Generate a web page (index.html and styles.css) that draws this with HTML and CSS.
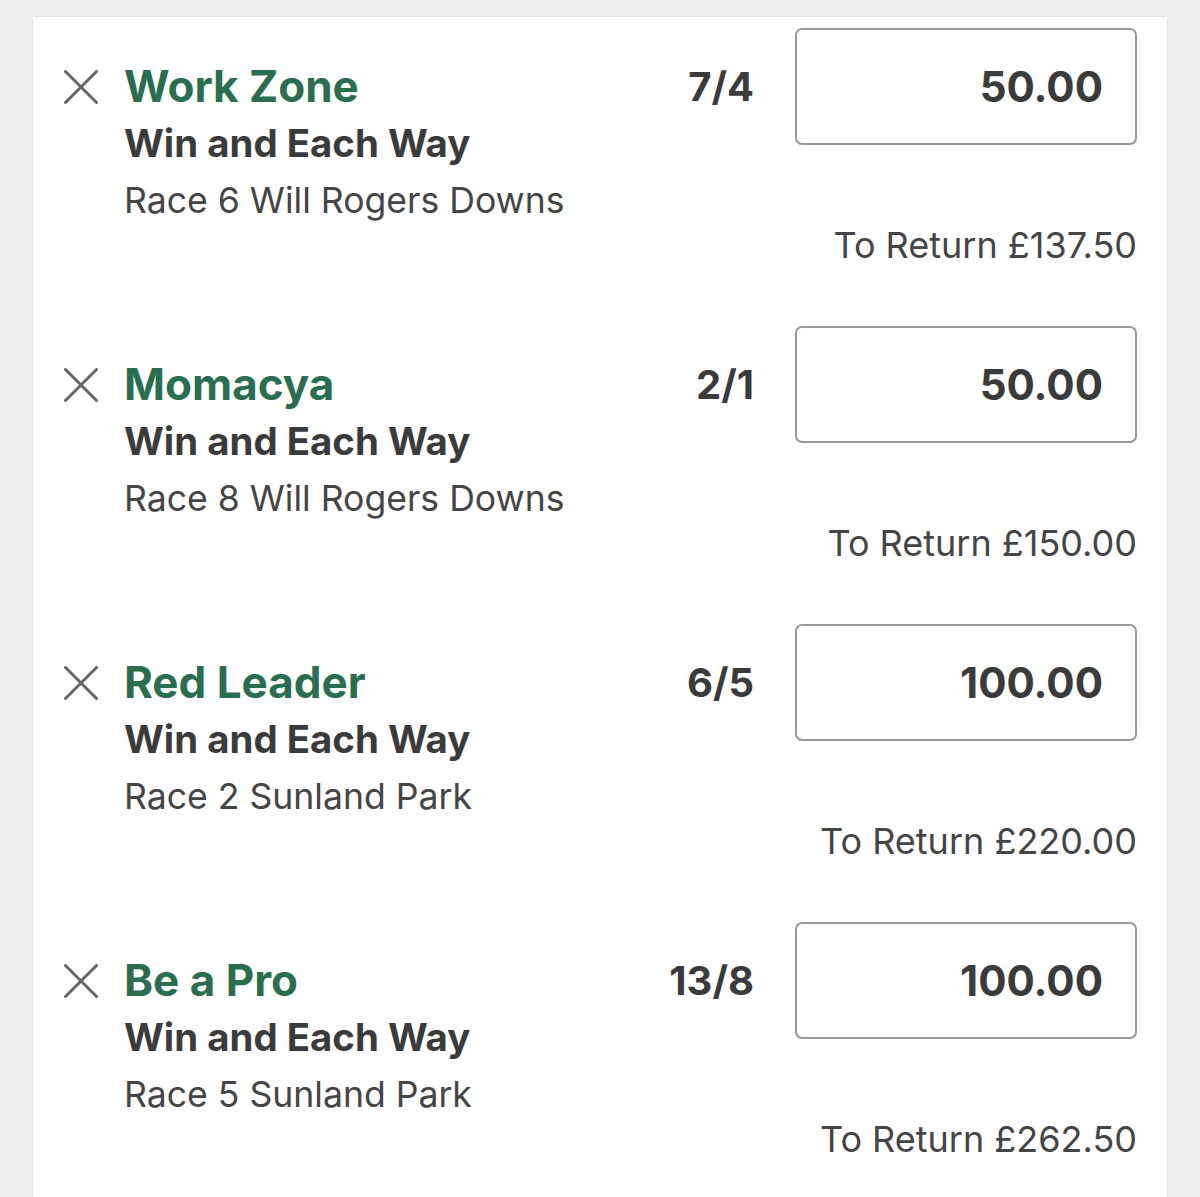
FILE: index.html
```html
<!DOCTYPE html>
<html lang="en">
<head>
<meta charset="utf-8">
<title>Bet slip</title>
<link rel="stylesheet" href="styles.css">
</head>
<body>
<div class="card">
  <div class="bet">
    <div class="remove"><svg viewBox="0 0 34 34" width="34" height="34"><path d="M1.5 1.5 L32.5 32.5 M32.5 1.5 L1.5 32.5" stroke="#666" stroke-width="3" stroke-linecap="round" fill="none"/></svg></div>
    <div class="info">
      <div class="name">Work Zone</div>
      <div class="market">Win and Each Way</div>
      <div class="event">Race 6 Will Rogers Downs</div>
    </div>
    <div class="odds">7/4</div>
    <div class="stakecol">
      <div class="stake">50.00</div>
      <div class="ret">To Return £137.50</div>
    </div>
  </div>
  <div class="bet">
    <div class="remove"><svg viewBox="0 0 34 34" width="34" height="34"><path d="M1.5 1.5 L32.5 32.5 M32.5 1.5 L1.5 32.5" stroke="#666" stroke-width="3" stroke-linecap="round" fill="none"/></svg></div>
    <div class="info">
      <div class="name">Momacya</div>
      <div class="market">Win and Each Way</div>
      <div class="event">Race 8 Will Rogers Downs</div>
    </div>
    <div class="odds">2/1</div>
    <div class="stakecol">
      <div class="stake">50.00</div>
      <div class="ret">To Return £150.00</div>
    </div>
  </div>
  <div class="bet">
    <div class="remove"><svg viewBox="0 0 34 34" width="34" height="34"><path d="M1.5 1.5 L32.5 32.5 M32.5 1.5 L1.5 32.5" stroke="#666" stroke-width="3" stroke-linecap="round" fill="none"/></svg></div>
    <div class="info">
      <div class="name">Red Leader</div>
      <div class="market">Win and Each Way</div>
      <div class="event">Race 2 Sunland Park</div>
    </div>
    <div class="odds">6/5</div>
    <div class="stakecol">
      <div class="stake">100.00</div>
      <div class="ret">To Return £220.00</div>
    </div>
  </div>
  <div class="bet">
    <div class="remove"><svg viewBox="0 0 34 34" width="34" height="34"><path d="M1.5 1.5 L32.5 32.5 M32.5 1.5 L1.5 32.5" stroke="#666" stroke-width="3" stroke-linecap="round" fill="none"/></svg></div>
    <div class="info">
      <div class="name">Be a Pro</div>
      <div class="market">Win and Each Way</div>
      <div class="event">Race 5 Sunland Park</div>
    </div>
    <div class="odds">13/8</div>
    <div class="stakecol">
      <div class="stake">100.00</div>
      <div class="ret">To Return £262.50</div>
    </div>
  </div>
</div>
</body>
</html>
```
FILE: styles.css
```css
html, body {
  margin: 0;
  padding: 0;
  height: 1197px;
  overflow: hidden;
  background: #efefef;
}
body {
  font-family: Inter, "Liberation Sans", Arial, sans-serif;
  color: #3b3b3b;
}
.card {
  margin: 17px 0 0 33px;
  width: 1134px;
  background: #fff;
  box-shadow: 0 0 2px rgba(0, 0, 0, 0.12);
  padding-bottom: 60px;
}
.bet {
  display: flex;
  align-items: flex-start;
  padding: 11px 30px 47px 31px;
}
.remove {
  width: 34px;
  height: 34px;
  margin-top: 42px;
  margin-right: 26px;
  flex: none;
}
.remove svg { display: block; }
.info {
  flex: 1;
  margin-top: 29px;
}
.name {
  font-size: 44px;
  line-height: 58px;
  font-weight: 700;
  color: #2a6e50;
}
.market {
  font-size: 38.4px;
  line-height: 57px;
  font-weight: 700;
  color: #3b3b3b;
}
.event {
  font-size: 35.6px;
  line-height: 57px;
  font-weight: 400;
  color: #454545;
}
.odds {
  font-size: 40px;
  line-height: 117px;
  font-weight: 700;
  color: #3b3b3b;
  margin-right: 41px;
  text-align: right;
}
.stakecol {
  width: 342px;
  flex: none;
  display: flex;
  flex-direction: column;
}
.stake {
  box-sizing: border-box;
  height: 117px;
  border: 2px solid #999;
  border-radius: 7px;
  padding-right: 32px;
  text-align: right;
  font-size: 42px;
  line-height: 113px;
  font-weight: 700;
  color: #3b3b3b;
}
.ret {
  margin-top: 77px;
  font-size: 36px;
  line-height: 46px;
  text-align: right;
  color: #454545;
}
```
